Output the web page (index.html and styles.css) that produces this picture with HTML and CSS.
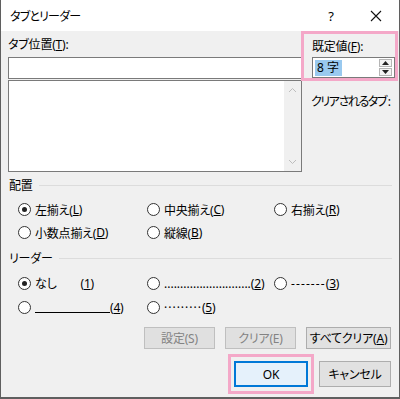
FILE: index.html
```html
<!DOCTYPE html>
<html lang="ja">
<head>
<meta charset="utf-8">
<link rel="stylesheet" href="styles.css">
</head>
<body>
<div class="window">
  <div class="titlebar">
    <span class="title">タブとリーダー</span>
    <span class="help">?</span>
    <span class="close"><svg width="12" height="12" viewBox="0 0 12 12"><path d="M1 1L11 11M11 1L1 11" stroke="#111" stroke-width="1.1"/></svg></span>
  </div>
  <div class="body">
    <div class="top">
      <div class="leftcol">
        <div class="label">タブ位置(<u>T</u>):</div>
        <div class="textbox"></div>
        <div class="listbox">
          <div class="scroll">
            <svg width="9" height="6" viewBox="0 0 9 6"><path d="M1 5L4.5 1.5L8 5" fill="none" stroke="#bdbdbd" stroke-width="1"/></svg>
            <svg width="9" height="6" viewBox="0 0 9 6"><path d="M1 1L4.5 4.5L8 1" fill="none" stroke="#bdbdbd" stroke-width="1"/></svg>
          </div>
        </div>
      </div>
      <div class="rightcol">
        <div class="highlight">
          <div class="label">既定値(<u>F</u>):</div>
          <div class="spin">
            <span class="sel">8 字</span>
            <span class="spinbtns">
              <span class="sb"><svg width="7" height="4" viewBox="0 0 7 4"><path d="M0 4L3.5 0L7 4Z" fill="#222"/></svg></span>
              <span class="sb"><svg width="7" height="4" viewBox="0 0 7 4"><path d="M0 0L3.5 4L7 0Z" fill="#222"/></svg></span>
            </span>
          </div>
        </div>
        <div class="cleared">クリアされるタブ :</div>
      </div>
    </div>

    <div class="group">
      <div class="legend"><span>配置</span><span class="rule"></span></div>
      <div class="grid">
        <div class="opt"><span class="radio on"></span>左揃え(<u>L</u>)</div>
        <div class="opt"><span class="radio"></span>中央揃え(<u>C</u>)</div>
        <div class="opt"><span class="radio"></span>右揃え(<u>R</u>)</div>
        <div class="opt"><span class="radio"></span>小数点揃え(<u>D</u>)</div>
        <div class="opt"><span class="radio"></span>縦線(<u>B</u>)</div>
      </div>
    </div>

    <div class="group g2">
      <div class="legend"><span>リーダー</span><span class="rule"></span></div>
      <div class="grid">
        <div class="opt"><span class="radio on"></span>なし<span class="gap"></span>(<u>1</u>)</div>
        <div class="opt"><span class="radio"></span><span class="dots">...........................</span>(<u>2</u>)</div>
        <div class="opt"><span class="radio"></span><span class="dash">-------</span>(<u>3</u>)</div>
        <div class="opt"><span class="radio"></span><span class="line"></span>(<u>4</u>)</div>
        <div class="opt"><span class="radio"></span><span class="mdots">·········</span>(<u>5</u>)</div>
      </div>
    </div>

    <div class="btnrow">
      <button class="btn disabled">設定(S)</button>
      <button class="btn disabled">クリア(E)</button>
      <button class="btn wide">すべてクリア(<u>A</u>)</button>
    </div>
    <div class="btnrow2">
      <div class="okwrap"><button class="btn ok">OK</button></div>
      <button class="btn cancel">キャンセル</button>
    </div>
  </div>
</div>
</body>
</html>
```
FILE: styles.css
```css
* { box-sizing: border-box; }
html, body { margin: 0; padding: 0; }
body {
  width: 400px; height: 399px; overflow: hidden;
  font-family: "Noto Sans", "Noto Sans CJK JP", sans-serif;
  font-size: 12px; color: #000;
  background: #f0f0f0;
  font-feature-settings: "palt" 1;
  letter-spacing: -0.2px;
  white-space: nowrap;
}
u { text-decoration: underline; text-underline-offset: 1px; }
.window {
  width: 400px; height: 399px;
  border-left: 1px solid #5f5f5f;
  border-right: 1px solid #5f5f5f;
  border-bottom: 2px solid #5f5f5f;
  display: flex; flex-direction: column;
  background: #f0f0f0;
}
.titlebar {
  height: 31px; background: #fff;
  display: flex; align-items: center;
  padding-left: 9px;
  flex: none;
}
.title { flex: 1; font-size: 12px; letter-spacing: -0.8px; }
.help { width: 14px; margin-right: 32px; font-size: 13px; text-align: center; }
.close { width: 12px; margin-right: 17px; display: flex; }
.body { flex: 1; display: flex; flex-direction: column; }
.top { display: flex; height: 141px; }
.leftcol { width: 300px; padding-left: 7px; display: flex; flex-direction: column; }
.leftcol .label { height: 26px; line-height: 28px; }
.textbox { height: 22px; background: #fff; border: 1px solid #7a7a7a; width: 294px; }
.listbox { height: 94px; margin-top: 1px; background: #fff; border: 1px solid #7a7a7a; width: 294px; display: flex; justify-content: flex-end; }
.scroll { width: 17px; background: #f0f0f0; display: flex; flex-direction: column; justify-content: space-between; align-items: center; padding: 6px 0 6px; }
.rightcol { flex: 1; display: flex; flex-direction: column; min-width: 0; }
.highlight {
  border: 3px solid #f4a8c8;
  height: 50px; width: 97px;
  padding: 0 0 0 8px;
}
.highlight .label { height: 23px; line-height: 26px; }
.spin {
  width: 83px; height: 21px; background: #fff; border: 1px solid #7a7a7a;
  display: flex; align-items: center; justify-content: space-between; padding-left: 2px;
}
.sel { background: #99c9ef; padding: 0 3px 0 2px; line-height: 16px; height: 16px; font-feature-settings: normal; letter-spacing: 0; }
.spinbtns { display: flex; flex-direction: column; gap: 1px; margin-right: 2px; }
.sb { width: 13px; height: 8px; background: #f4f4f4; border: 1px solid #b5b5b5; display: flex; align-items: center; justify-content: center; }
.cleared { padding-left: 10px; margin-top: 11px; letter-spacing: -1.4px; }
.group { padding: 0 7px 0 8px; }
.legend { display: flex; align-items: center; height: 26px; gap: 6px; }
.rule { flex: 1; height: 1px; background: #dcdcdc; margin-top: 1px; }
.grid { display: grid; grid-template-columns: 129px 127px 1fr; grid-auto-rows: 23px; padding-left: 9px; }
.opt { display: flex; align-items: center; white-space: nowrap; }
.radio {
  width: 13px; height: 13px; border-radius: 50%;
  border: 1px solid #333; background: #fff;
  margin-right: 4px; flex: none; position: relative;
}
.radio.on::after {
  content: ""; position: absolute; left: 3px; top: 3px;
  width: 5px; height: 5px; border-radius: 50%; background: #222;
}
.g2 { margin-top: 1px; }
.g2 .grid { grid-auto-rows: 24px; }
.gap { width: 24px; }
.dots { letter-spacing: 0; }
.dash { letter-spacing: 1.1px; }
.line { width: 75px; height: 1px; background: #000; align-self: flex-end; margin-bottom: 6px; }
.mdots { letter-spacing: 1px; }
.btnrow { display: flex; justify-content: flex-end; gap: 10px; padding-right: 8px; margin-top: 8px; }
.btn {
  font-family: inherit; font-size: 12px; color: #000;
  font-feature-settings: "palt" 1; letter-spacing: -0.2px;
  background: #e1e1e1; border: 1px solid #adadad;
  height: 22px; padding: 0; margin: 0; white-space: nowrap;
}
.btn.disabled { color: #838383; background: #e0e0e0; border-color: #bfbfbf; width: 71px; }
.btn.wide { width: 85px; }
.btnrow2 { display: flex; justify-content: flex-end; align-items: center; padding-right: 8px; margin-top: 5px; }
.okwrap { border: 3px solid #f4a8c8; padding: 4px 3px; margin-right: 5px; display: flex; }
.btn.ok { width: 74px; height: 26px; border: 2px solid #0078d7; background: #e5f1fb; }
.btn.cancel { width: 72px; height: 26px; }
```
